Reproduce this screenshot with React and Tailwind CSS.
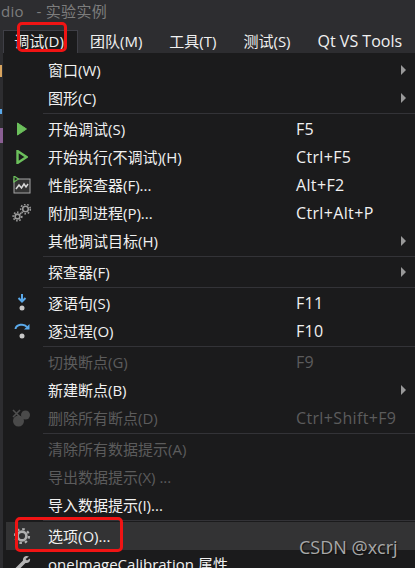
const CJK = 'font-["Open_Sans","Noto_Sans_CJK_SC",sans-serif]'

const TOPS = ['团队(M)', '工具(T)', '测试(S)']

function Play({ hollow }) {
  return (
    <svg width="12" height="14" viewBox="0 0 12 14">
      <path d="M1.5 1 L10.5 7 L1.5 13 Z" fill={hollow ? 'none' : '#6cc05c'} stroke="#6cc05c" strokeWidth={hollow ? 2.4 : 1} />
    </svg>
  )
}

function Perf() {
  return (
    <svg width="18" height="18" viewBox="0 0 18 18">
      <rect x="1" y="3" width="16" height="14" fill="#333" stroke="#a5a5a5" />
      <path d="M3 13 L6 9 L8.500 12 L11 8 L13 11 L15 8" fill="none" stroke="#d8d8d8" strokeWidth="1.5" />
      <path d="M1 0 L5.500 3 L1 6 Z" fill="#222" stroke="#6cc05c" strokeWidth="1.2" />
    </svg>
  )
}

function Gears() {
  return (
    <svg width="20" height="18" viewBox="0 0 20 18" fill="none" stroke="#9a9a9a">
      <circle cx="13.500" cy="5" r="2.800" strokeWidth="1.600" />
      <circle cx="13.500" cy="5" r="4.800" strokeWidth="1.600" strokeDasharray="1.700 1.700" />
      <circle cx="5.500" cy="12.500" r="2.400" strokeWidth="1.600" />
      <circle cx="5.500" cy="12.500" r="4.300" strokeWidth="1.600" strokeDasharray="1.600 1.600" />
    </svg>
  )
}

function StepInto() {
  return (
    <svg width="12" height="18" viewBox="0 0 12 18">
      <path d="M6 0 V7 M2.500 4 L6 7.500 L9.500 4" fill="none" stroke="#5aa9ea" strokeWidth="2" />
      <circle cx="6" cy="14" r="2.500" fill="#c8c8c8" />
    </svg>
  )
}

function StepOver() {
  return (
    <svg width="16" height="18" viewBox="0 0 16 18">
      <path d="M1.500 7 C2 2.500 10 1 13 5" fill="none" stroke="#5aa9ea" strokeWidth="2" />
      <path d="M15.500 2 V7.500 H10 Z" fill="#5aa9ea" />
      <circle cx="8" cy="14" r="2.500" fill="#c8c8c8" />
    </svg>
  )
}

function ClearBreaks() {
  return (
    <svg width="20" height="18" viewBox="0 0 20 18">
      <circle cx="13.500" cy="6" r="4.500" fill="#4a4a4a" />
      <circle cx="6.500" cy="12" r="5.500" fill="#4a4a4a" />
      <path d="M1 1 L8 8 M8 1 L1 8" stroke="#4f4f4f" strokeWidth="1.600" />
    </svg>
  )
}

function Gear() {
  return (
    <svg width="18" height="18" viewBox="0 0 18 18" fill="none" stroke="#b0b0b0">
      <circle cx="9" cy="9" r="4.400" strokeWidth="2.600" />
      <circle cx="9" cy="9" r="7" strokeWidth="2.200" strokeDasharray="2.600 2.900" />
    </svg>
  )
}

function Wrench() {
  return (
    <svg width="18" height="18" viewBox="0 0 18 18">
      <path d="M16 1.500 C13 0 9.500 1.500 10 5.500 L1.500 14 L4 16.500 L12.500 8 C16 8.500 17.500 6 17 3.500 L14 5.500 L12.500 4 Z" fill="#b5b5b5" />
    </svg>
  )
}

function Sep() {
  return <div className="my-px ml-[40px] h-px bg-[#333337]" />
}

function Item({ icon, label, keys, arrow, off, hot }) {
  return (
    <div className={`ml-[3px] flex h-7 items-center text-[15px] ${off ? 'text-[#5c5c5c]' : 'text-[#f1f1f1]'} ${hot ? 'bg-[#333334]' : ''}`}>
      <div className="flex w-[42px] shrink-0 justify-center pr-[10px]">{icon}</div>
      <div className="w-[248px] shrink-0 whitespace-nowrap">{label}</div>
      <div className="flex-1 whitespace-nowrap text-[16px] tracking-[0.35px]">{keys}</div>
      {arrow && <div className="mr-[9px] h-0 w-0 border-y-[5px] border-l-[5px] border-y-transparent border-l-[#999]" />}
    </div>
  )
}

export default function App() {
  return (
    <div className={`relative h-[568px] w-[415px] overflow-hidden bg-[#2d2d30] ${CJK}`}>
      <div className="h-[30px] whitespace-pre pl-px text-[15px] leading-[23px] tracking-[0.3px] text-[#7d7d7d]">dio   - 实验实例</div>

      <div className="flex h-[23px] items-center text-[15px] text-[#f1f1f1]">
        <div className="ml-[3px] flex h-[23px] w-[75px] items-center justify-center border-x border-t border-[#3f3f46] bg-[#1b1b1c] pb-px pr-[3px]">调试(D)</div>
        <div className="flex items-center gap-[27px] whitespace-nowrap pb-px pl-[12px]">
          {TOPS.map((t) => <span key={t}>{t}</span>)}
          <span className="text-[16px]">Qt VS Tools</span>
        </div>
      </div>

      <div className="flex h-[515px]">
        <div className="w-[3px] shrink-0 bg-[#2d2d30]" />
        <div className="flex-1 bg-[#1b1b1c] pt-[3px]">
          <Item label="窗口(W)" arrow />
          <Item label="图形(C)" arrow />
          <Sep />
          <Item icon={<Play />} label="开始调试(S)" keys="F5" />
          <Item icon={<Play hollow />} label="开始执行(不调试)(H)" keys="Ctrl+F5" />
          <Item icon={<Perf />} label="性能探查器(F)..." keys="Alt+F2" />
          <Item icon={<Gears />} label="附加到进程(P)..." keys="Ctrl+Alt+P" />
          <Item label="其他调试目标(H)" arrow />
          <Sep />
          <Item label="探查器(F)" arrow />
          <Sep />
          <Item icon={<StepInto />} label="逐语句(S)" keys="F11" />
          <Item icon={<StepOver />} label="逐过程(O)" keys="F10" />
          <Sep />
          <Item label="切换断点(G)" keys="F9" off />
          <Item label="新建断点(B)" arrow />
          <Item icon={<ClearBreaks />} label="删除所有断点(D)" keys="Ctrl+Shift+F9" off />
          <Sep />
          <Item label="清除所有数据提示(A)" off />
          <Item label="导出数据提示(X) ..." off />
          <Item label="导入数据提示(I)..." />
          <Sep />
          <Item icon={<Gear />} label="选项(O)..." hot />
          <Item icon={<Wrench />} label="oneImageCalibration 属性" />
        </div>
      </div>

      <div className="absolute left-0 top-[65px] h-[12px] w-[2px] bg-[#d9a55f]" />
      <div className="absolute left-0 top-[109px] h-[5px] w-[2px] bg-[#5aa9ea]" />
      <div className="absolute left-0 top-[128px] h-[15px] w-[3px] bg-[#8a5f93]" />

      <div className="absolute left-[17px] top-[22px] h-[30px] w-[50px] rounded-[5px] border-[3px] border-[#f01414]" />
      <div className="absolute left-[15px] top-[517px] h-[35px] w-[108px] rounded-[5px] border-[3px] border-[#f01414]" />
      <div className="absolute left-[299px] top-[534px] text-[18px] text-[#a8a8a8] [text-shadow:1px_1px_1px_#111]">CSDN @xcrj</div>
    </div>
  )
}
